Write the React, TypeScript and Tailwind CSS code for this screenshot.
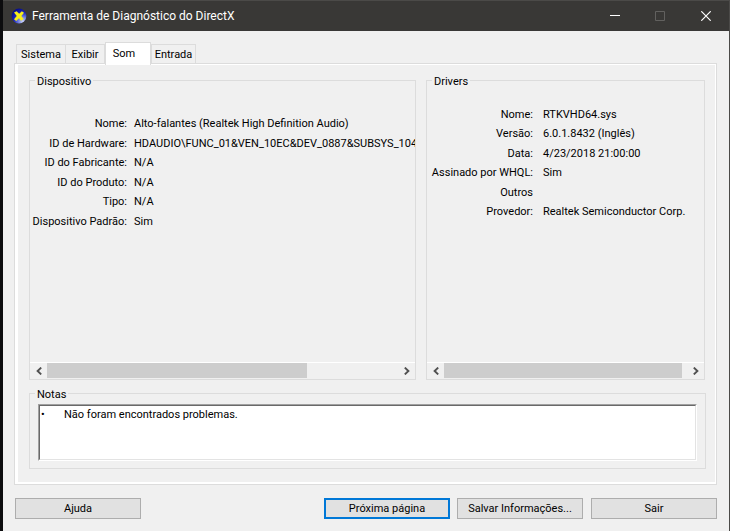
import type { ReactNode } from "react";
import clsx from "clsx";

type Row = [label: string, value: string];

const tabs = [
  { name: "Sistema", width: "w-[49px]" },
  { name: "Exibir", width: "w-[40px]" },
  { name: "Som", width: "w-[46px]" },
  { name: "Entrada", width: "w-[45px]" },
];

const deviceRows: Row[] = [
  ["Nome:", "Alto-falantes (Realtek High Definition Audio)"],
  ["ID de Hardware:", "HDAUDIO\\FUNC_01&VEN_10EC&DEV_0887&SUBSYS_1043"],
  ["ID do Fabricante:", "N/A"],
  ["ID do Produto:", "N/A"],
  ["Tipo:", "N/A"],
  ["Dispositivo Padrão:", "Sim"],
];

const driverRows: Row[] = [
  ["Nome:", "RTKVHD64.sys"],
  ["Versão:", "6.0.1.8432 (Inglês)"],
  ["Data:", "4/23/2018 21:00:00"],
  ["Assinado por WHQL:", "Sim"],
  ["Outros", ""],
  ["Provedor:", "Realtek Semiconductor Corp."],
];

const DirectXIcon = () => (
  <svg className="size-4" viewBox="0 0 16 16" aria-hidden="true">
    <defs>
      <radialGradient id="ball" cx="0.75" cy="0.85" r="0.9">
        <stop offset="0" stopColor="#c9d2f4" />
        <stop offset="0.35" stopColor="#6a78dc" />
        <stop offset="0.65" stopColor="#1a24b8" />
        <stop offset="1" stopColor="#080e88" />
      </radialGradient>
    </defs>
    <circle cx="8" cy="8" r="7.4" fill="url(#ball)" />
    <path
      d="M3 4.6 5.6 3.2 8.2 5.8 10.8 3.2l2.2 1.6L10.4 8l2.2 3-2.6 1.8L8 10.2l-2.8 2.8-2.2-1.8L5.8 8Z"
      fill="#f7ef1a"
    />
  </svg>
);

const TitleBar = () => (
  <header className="flex h-[31px] items-center border-t border-[#4b4a48] bg-[#393836] pl-2 text-white">
    <DirectXIcon />
    <h1 className="ml-[5px] flex-1 text-[12px] leading-4">
      Ferramenta de Diagnóstico do DirectX
    </h1>
    <button aria-label="Minimizar" className="flex h-full w-[45px] items-center justify-center">
      <svg className="size-[10px]" viewBox="0 0 10 10" shapeRendering="crispEdges">
        <path d="M0 4h10v1H0z" fill="#fff" />
      </svg>
    </button>
    <button aria-label="Maximizar" disabled className="flex h-full w-[45px] items-center justify-center">
      <svg className="size-[10px]" viewBox="0 0 10 10">
        <path d="M.5.5h9v9h-9z" fill="none" stroke="#62615f" />
      </svg>
    </button>
    <button aria-label="Fechar" className="flex h-full w-[47px] items-center justify-center">
      <svg className="size-[10px]" viewBox="0 0 10 10">
        <path d="M.3.3l9.4 9.4M9.7.3.3 9.7" stroke="#fff" strokeWidth="1.2" />
      </svg>
    </button>
  </header>
);

const Arrow = ({ flip }: { flip?: boolean }) => (
  <svg className={clsx("h-2 w-[6px]", flip && "rotate-180")} viewBox="0 0 6 8">
    <path d="M5.2.6 1.6 4l3.6 3.4" fill="none" stroke="#505050" strokeWidth="1.9" />
  </svg>
);

const ScrollBar = ({ thumb }: { thumb: number }) => (
  <div className="flex h-[17px] border-t border-white pb-px">
    <button aria-label="Rolar para a esquerda" className="flex w-[17px] items-center justify-center">
      <Arrow />
    </button>
    <div className="flex-1">
      <div className="h-full bg-[#cdcdcd]" style={{ width: `${thumb}%` }} />
    </div>
    <button aria-label="Rolar para a direita" className="flex w-[17px] items-center justify-center">
      <Arrow flip />
    </button>
  </div>
);

interface IGroup {
  title: ReactNode;
  children: ReactNode;
}

const Group = ({ title, children }: IGroup) => (
  <fieldset className="min-w-0 border border-[#dcdcdc]">
    <legend className="ml-[5px] px-0.5 pt-0.5 leading-[15px]">{title}</legend>
    {children}
  </fieldset>
);

interface IDetails {
  rows: Row[];
  labelWidth: string;
  rowHeights: string;
}

const Details = ({ rows, labelWidth, rowHeights }: IDetails) => (
  <dl className="flex-1 overflow-hidden whitespace-nowrap">
    {rows.map(([label, value]) => (
      <div key={label} className={clsx("flex items-center", rowHeights)}>
        <dt className={clsx("shrink-0 text-right", labelWidth)}>{label}</dt>
        <dd>{value}</dd>
      </div>
    ))}
  </dl>
);

interface IDialogButton {
  children: ReactNode;
  primary?: boolean;
  className?: string;
}

const DialogButton = ({ children, primary, className }: IDialogButton) => (
  <button
    className={clsx(
      "flex h-[21px] w-[126px] items-center justify-center bg-[#e1e1e1]",
      primary ? "border-2 border-[#0078d7]" : "border border-[#adadad]",
      className,
    )}
  >
    {children}
  </button>
);

export default function App() {
  return (
    <div className="flex min-h-screen flex-col border-r border-l-3 border-r-[#4b4a48] border-l-[#0c0c0e] bg-[#f0f0f0] font-[Roboto,sans-serif] text-[11px] leading-[15px] text-black">
      <TitleBar />
      <main className="flex flex-1 flex-col pt-[11px] pr-3 pb-3 pl-[11px]">
        <div role="tablist" className="flex items-end pl-0.5">
          {tabs.map(({ name, width }) =>
            name === "Som" ? (
              <button
                key={name}
                role="tab"
                aria-selected="true"
                className={clsx("z-10 -mb-0.5 h-[23px] border border-b-0 border-[#dcdcdc] bg-white pr-2 pb-0.5", width)}
              >
                {name}
              </button>
            ) : (
              <button
                key={name}
                role="tab"
                aria-selected="false"
                className={clsx("h-[19px] border border-b-0 border-[#dcdcdc] first:border-r-0", width)}
              >
                {name}
              </button>
            ),
          )}
        </div>
        <div role="tabpanel" className="flex flex-1 flex-col border border-[#dcdcdc]">
          <div className="flex flex-1 flex-col gap-[5px] border-t border-r border-b-2 border-l-3 border-white pt-[7px] pr-[9px] pb-[13px] pl-[11px]">
            <div className="mr-px grid flex-1 grid-cols-[387fr_279fr] gap-[10px]">
              <Group title="Dispositivo">
                <div className="flex h-full flex-col pt-[25px]">
                  <Details rows={deviceRows} labelWidth="w-[104px] pr-[7px]" rowHeights="odd:h-[19px] even:h-5" />
                  <ScrollBar thumb={74} />
                </div>
              </Group>
              <Group title="Drivers">
                <div className="flex h-full flex-col pt-[15px]">
                  <Details rows={driverRows} labelWidth="w-[116px] pr-[10px]" rowHeights="odd:h-5 even:h-[19px]" />
                  <ScrollBar thumb={98} />
                </div>
              </Group>
            </div>
            <Group title={<label htmlFor="notes">Notas</label>}>
              <div className="mx-2 mt-0.5 mb-[7px] border border-t-[#a0a0a0] border-r-white border-b-white border-l-[#a0a0a0]">
                <textarea
                  id="notes"
                  readOnly
                  defaultValue={"•\tNão foram encontrados problemas."}
                  className="block h-[55px] w-full resize-none border border-t-[#696969] border-r-[#e3e3e3] border-b-[#e3e3e3] border-l-[#696969] bg-white pt-px pl-px outline-none [tab-size:23px]"
                />
              </div>
            </Group>
          </div>
        </div>
        <div className="mt-[13px] flex pl-px">
          <DialogButton className="mr-auto">Ajuda</DialogButton>
          <DialogButton primary>Próxima página</DialogButton>
          <DialogButton className="mr-2 ml-[7px]">Salvar Informações...</DialogButton>
          <DialogButton>Sair</DialogButton>
        </div>
      </main>
    </div>
  );
}
